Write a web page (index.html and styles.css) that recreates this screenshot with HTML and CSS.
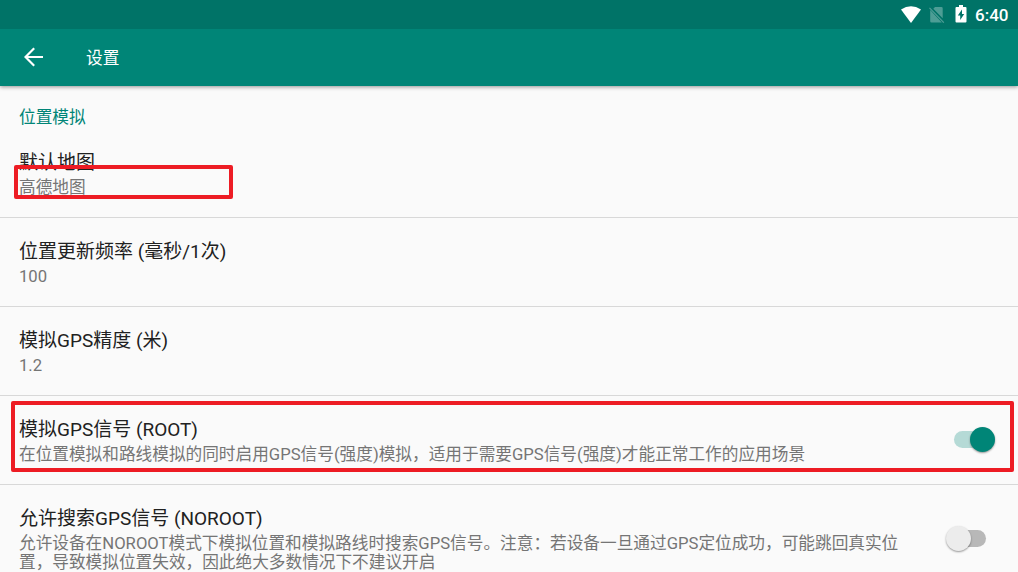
FILE: index.html
```html
<!DOCTYPE html>
<html lang="zh-CN">
<head>
<meta charset="utf-8">
<title>设置</title>
<link rel="stylesheet" href="styles.css">
</head>
<body>
<div class="screen">
  <div class="statusbar">
    <svg class="wifi" viewBox="0 0 20 17"><path d="M0 3.4Q10-3.1 20 3.4L10 17Z"/></svg>
    <svg class="sim" viewBox="0 0 16 17"><path d="M6 1H12.4Q13.7 1 13.7 2.3V12.3L4.3 2.8ZM1.2 4L12.8 16.5H2.5Q1.2 16.5 1.2 15.2Z"/><path class="slash" d="M.5 1.9L14.8 16.6"/></svg>
    <svg class="battery" viewBox="0 0 12 18"><path fill-rule="evenodd" d="M4 0H8V2H10.5Q11.5 2 11.5 3V16.5Q11.5 17.5 10.5 17.5H1.5Q.5 17.5 .5 16.5V3Q.5 2 1.5 2H4ZM7 4.6L2.8 10.6H5.2V15.1L9.2 8.9H7Z"/></svg>
    <span class="clock">6:40</span>
  </div>
  <header class="appbar">
    <svg class="back" viewBox="0 0 20 20"><path d="M19 10H2M10.2 1.3L1.5 10L10.2 18.7"/></svg>
    <h1 class="heading">设置</h1>
  </header>
  <main class="content">
    <h2 class="category">位置模拟</h2>
    <section class="row"><div class="text"><div class="title">默认地图</div><div class="summary">高德地图</div></div></section>
    <section class="row"><div class="text"><div class="title">位置更新频率 (毫秒/1次)</div><div class="summary">100</div></div></section>
    <section class="row"><div class="text"><div class="title">模拟GPS精度 (米)</div><div class="summary">1.2</div></div></section>
    <section class="row"><div class="text"><div class="title">模拟GPS信号 (ROOT)</div><div class="summary">在位置模拟和路线模拟的同时启用GPS信号(强度)模拟，适用于需要GPS信号(强度)才能正常工作的应用场景</div></div><div class="switch on"><span class="thumb"></span></div></section>
    <section class="row last"><div class="text"><div class="title">允许搜索GPS信号 (NOROOT)</div><div class="summary">允许设备在NOROOT模式下模拟位置和模拟路线时搜索GPS信号。注意：若设备一旦通过GPS定位成功，可能跳回真实位<br>置，导致模拟位置失效，因此绝大多数情况下不建议开启</div></div><div class="switch"><span class="thumb"></span></div></section>
  </main>
  <div class="mark mark-map"></div>
  <div class="mark mark-root"></div>
</div>
</body>
</html>
```
FILE: styles.css
```css
* { box-sizing: border-box; }
body { margin: 0; font-family: Roboto, "Noto Sans CJK SC", sans-serif; }
.screen { position: relative; width: 1018px; height: 572px; overflow: hidden; background: #fafafa; display: flex; flex-direction: column; }
.statusbar { flex: none; height: 29px; background: #007367; display: flex; align-items: center; padding-right: 10px; justify-content: flex-end; color: #fff; z-index: 2; }
.statusbar svg { fill: #fff; flex: none; }
.wifi { width: 20px; height: 17px; margin: 0 8px 1px 0; }
.statusbar .sim { width: 16px; height: 17px; margin: 0 10px 1px 0; fill: #4d9d95; }
.slash { stroke: #4d9d95; stroke-width: 1.3; }
.battery { width: 12px; height: 18px; margin: 0 8px 2px 0; }
.clock { font-size: 17px; font-weight: 500; line-height: 29px; padding-top: 1px; width: 33px; white-space: nowrap; }
.appbar { flex: none; height: 57px; background: #008577; display: flex; align-items: center; padding-left: 24px; box-shadow: 0 1px 4px rgba(0, 0, 0, .42); z-index: 1; }
.back { width: 20px; height: 20px; margin-bottom: 1px; fill: none; stroke: #fff; stroke-width: 2.2; }
.heading { margin: 0 0 0 42px; padding-top: 2px; font-size: 16.7px; line-height: 24px; font-weight: 400; color: #fff; }
.content { flex: none; }
.category { margin: 0; padding: 20px 19px 0; height: 43px; font-size: 16.7px; line-height: 24px; font-weight: 400; color: #008577; }
.row { height: 89px; padding: 22px 23px 0 19px; border-bottom: 1px solid #d8d8d8; display: flex; justify-content: space-between; }
.text { flex: none; white-space: nowrap; }
.title { font-size: 19px; line-height: 24px; color: #212121; }
.summary { margin-top: 3px; font-size: 16.66px; line-height: 19px; color: #757575; }
.last { border: 0; padding-right: 31px; }
.switch { flex: none; width: 41px; height: 25px; margin-top: 9px; display: flex; align-items: center; position: relative; }
.switch::before { content: ""; width: 35px; height: 17px; border-radius: 9px; background: #b8b8b8; margin-left: 5px; }
.last .switch { margin-top: 19px; }
.thumb { position: absolute; left: 0; top: 0; width: 25px; height: 25px; border-radius: 50%; background: #ececec; box-shadow: 0 1px 2px rgba(0, 0, 0, .4); }
.on::before { background: #b5dad6; margin-left: 0; }
.on .thumb { left: auto; right: 0; background: #008577; }
.mark { position: absolute; border: 4px solid #ed1c24; border-radius: 2px; z-index: 3; }
.mark-map { left: 14px; top: 165px; width: 219px; height: 34px; }
.mark-root { left: 11px; top: 401px; width: 1003px; height: 71px; }
```
